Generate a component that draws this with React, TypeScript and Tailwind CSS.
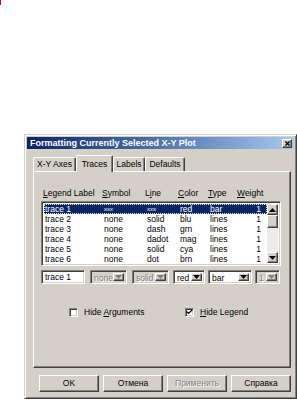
import { Check, X } from "lucide-react";

const RAISED =
  "border border-t-white border-l-white border-b-[#404040] border-r-[#404040] shadow-[inset_-1px_-1px_0_#808080]";
const SUNKEN =
  "border border-t-[#808080] border-l-[#808080] border-b-white border-r-white shadow-[inset_1px_1px_0_#404040,inset_-1px_-1px_0_#d4d0c8]";
const DISABLED = "text-[#808080] [text-shadow:1px_1px_0_#fff]";
const COLS = "grid grid-cols-[59px_43px_33px_30px_29px_1fr]";

const TRACES = [
  { name: "trace 1", symbol: "xxx", line: "xxx", color: "red", type: "bar", weight: "1" },
  { name: "trace 2", symbol: "none", line: "solid", color: "blu", type: "lines", weight: "1" },
  { name: "trace 3", symbol: "none", line: "dash", color: "grn", type: "lines", weight: "1" },
  { name: "trace 4", symbol: "none", line: "dadot", color: "mag", type: "lines", weight: "1" },
  { name: "trace 5", symbol: "none", line: "solid", color: "cya", type: "lines", weight: "1" },
  { name: "trace 6", symbol: "none", line: "dot", color: "brn", type: "lines", weight: "1" },
];

const TABS = [
  { label: "X-Y Axes", w: "w-[43px]" },
  { label: "Traces", w: "w-[37px]", active: true },
  { label: "Labels", w: "w-[32px]" },
  { label: "Defaults", w: "w-[40px]" },
];

function Arrow({ up, disabled }: { up?: boolean; disabled?: boolean }) {
  return (
    <svg width="7" height="4" viewBox="0 0 7 4" className={up ? "rotate-180" : ""}>
      <path d="M0 0h7L3.5 4z" fill={disabled ? "#808080" : "#000"} />
    </svg>
  );
}

function DropBtn({ disabled }: { disabled?: boolean }) {
  return (
    <div className={`w-[11px] h-full shrink-0 bg-[#d4d0c8] flex items-center justify-center ${RAISED}`}>
      <Arrow disabled={disabled} />
    </div>
  );
}

function Combo({ value, w, disabled }: { value: string; w: string; disabled?: boolean }) {
  return (
    <div
      className={`${w} h-[14px] flex items-stretch p-[2px] ${SUNKEN} ${
        disabled ? "bg-[#d4d0c8]" : "bg-white"
      }`}
    >
      <span className={`flex-1 pl-[1px] leading-[10px] ${disabled ? DISABLED : ""}`}>{value}</span>
      <DropBtn disabled={disabled} />
    </div>
  );
}

function CheckBox({ checked, children }: { checked?: boolean; children: React.ReactNode }) {
  return (
    <label className="flex items-center gap-[6px]">
      <span className={`w-[9px] h-[9px] bg-white flex items-center justify-center ${SUNKEN}`}>
        {checked && <Check className="w-[8px] h-[8px] text-black" strokeWidth={4} />}
      </span>
      <span>{children}</span>
    </label>
  );
}

export default function App() {
  return (
    <div className="w-[297px] h-[401px] bg-white overflow-hidden font-['Liberation_Sans',Arial,sans-serif] text-[8.5px] text-black">
      <div className="w-[1px] h-[5px] bg-red-600" />
      <div
        className={`ml-[24px] mt-[129px] w-[273px] h-[265px] bg-[#d4d0c8] p-[2px] flex flex-col border border-t-[#d4d0c8] border-l-[#d4d0c8] border-b-[#404040] border-r-[#404040] shadow-[inset_1px_1px_0_#fff,inset_-1px_-1px_0_#808080]`}
      >
        {/* title bar */}
        <div className="h-[12px] bg-gradient-to-r from-[#0a246a] to-[#a6caf0] flex items-center justify-between pl-[3px] pr-[2px]">
          <span className="text-white font-bold text-[9px] leading-none">
            Formatting Currently Selected X-Y Plot
          </span>
          <div className={`w-[10px] h-[9px] bg-[#d4d0c8] flex items-center justify-center ${RAISED}`}>
            <X className="w-[7px] h-[7px] text-black" strokeWidth={4} />
          </div>
        </div>

        {/* tabs */}
        <div className="mt-[6px] ml-[6px] h-[16px] flex items-end">
          {TABS.map((t) =>
            t.active ? (
              <div
                key={t.label}
                className={`${t.w} h-[17px] -mb-[1px] relative z-10 bg-[#d4d0c8] border border-b-0 border-t-white border-l-white border-r-[#404040] rounded-t-[2px] shadow-[inset_-1px_0_0_#808080] flex items-center justify-center`}
              >
                {t.label}
              </div>
            ) : (
              <div
                key={t.label}
                className={`${t.w} h-[14px] border border-b-0 border-t-white border-l-white border-r-[#404040] rounded-t-[2px] shadow-[inset_-1px_0_0_#808080] flex items-center justify-center`}
              >
                {t.label}
              </div>
            )
          )}
        </div>

        {/* panel */}
        <div className={`ml-[6px] w-[258px] h-[197px] pl-[7px] pt-[16px] ${RAISED}`}>
          <div className={`${COLS} h-[10px] pl-[2px] leading-[10px]`}>
            <span>
              <u>L</u>egend Label
            </span>
            <span>
              <u>S</u>ymbol
            </span>
            <span>
              L<u>i</u>ne
            </span>
            <span>
              <u>C</u>olor
            </span>
            <span>
              <u>T</u>ype
            </span>
            <span>
              <u>W</u>eight
            </span>
          </div>

          {/* list box */}
          <div className={`mt-[3px] w-[240px] h-[65px] bg-white p-[2px] flex ${SUNKEN}`}>
            <div className="flex-1 overflow-hidden">
              {TRACES.map((r, i) => (
                <div
                  key={r.name}
                  className={`${COLS} h-[10px] leading-[10px] pl-[1px] ${
                    i === 0
                      ? "bg-[#0a246a] text-white outline-1 outline-dotted outline-[#e8e8a0] -outline-offset-1"
                      : ""
                  }`}
                >
                  <span>{r.name}</span>
                  <span className={i === 0 ? "text-[6px]" : ""}>{r.symbol}</span>
                  <span className={i === 0 ? "text-[6px]" : ""}>{r.line}</span>
                  <span>{r.color}</span>
                  <span>{r.type}</span>
                  <span className="text-right pr-[6px]">{r.weight}</span>
                </div>
              ))}
            </div>
            {/* scrollbar */}
            <div className="w-[11px] flex flex-col bg-[#ecebe8]">
              <div className={`h-[11px] bg-[#d4d0c8] flex items-center justify-center ${RAISED}`}>
                <Arrow up />
              </div>
              <div className={`h-[13px] bg-[#d4d0c8] ${RAISED}`} />
              <div className="flex-1" />
              <div className={`h-[11px] bg-[#d4d0c8] flex items-center justify-center ${RAISED}`}>
                <Arrow />
              </div>
            </div>
          </div>

          {/* edit row */}
          <div className="mt-[4px] flex items-center">
            <div className={`w-[44px] h-[14px] bg-white pl-[3px] leading-[12px] ${SUNKEN}`}>trace 1</div>
            <div className="ml-[5px]">
              <Combo value="none" w="w-[37px]" disabled />
            </div>
            <div className="ml-[5px]">
              <Combo value="solid" w="w-[37px]" disabled />
            </div>
            <div className="ml-[4px]">
              <Combo value="red" w="w-[32px]" />
            </div>
            <div className="ml-[3px]">
              <Combo value="bar" w="w-[44px]" />
            </div>
            <div className="ml-[3px]">
              <Combo value="1" w="w-[25px]" disabled />
            </div>
          </div>

          {/* checkboxes */}
          <div className="mt-[22px] pl-[28px] grid grid-cols-[116px_1fr]">
            <CheckBox>
              Hide <u>A</u>rguments
            </CheckBox>
            <CheckBox checked>
              <u>H</u>ide Legend
            </CheckBox>
          </div>
        </div>

        {/* buttons */}
        <div className="mt-[7px] ml-[12px] flex gap-[4px]">
          {["OK", "Отмена", "Применить", "Справка"].map((b) => (
            <div
              key={b}
              className={`w-[60px] h-[17px] bg-[#d4d0c8] flex items-center justify-center ${RAISED} ${
                b === "Применить" ? DISABLED : ""
              }`}
            >
              {b}
            </div>
          ))}
        </div>
      </div>
    </div>
  );
}
